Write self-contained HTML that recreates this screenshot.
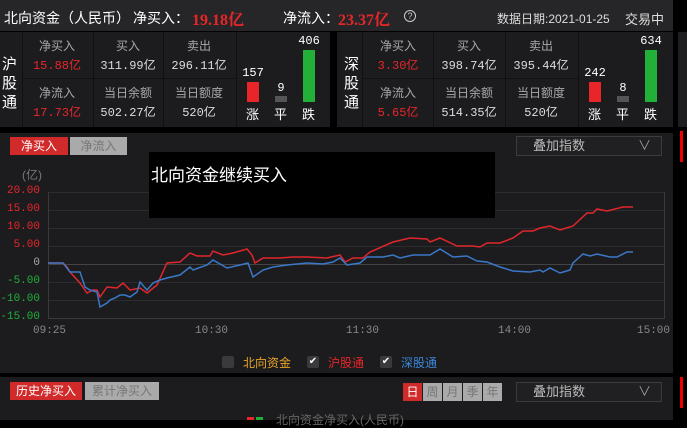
<!DOCTYPE html><html><head><meta charset="utf-8"><style>
*{margin:0;padding:0;box-sizing:border-box}
body{width:687px;height:420px;background:#000;position:relative;overflow:hidden;font-family:"Liberation Sans","Noto Sans CJK SC",sans-serif;color:#ddd}
.a{position:absolute;white-space:nowrap}
.hd{left:0;top:0;width:673px;height:31px;background:#262628}
.card{top:32px;height:95px;background:#1c1c1f}
.c{position:absolute;width:70px;height:46px;text-align:center;font-size:12px}
.c .l{color:#a8a8a8;margin-top:5px;font-size:12px}
.c .v{color:#ddd;margin-top:2px;font-family:"Liberation Mono","Noto Sans CJK SC",monospace;font-size:12px}
.c .r{color:#e8262a}
.bar{position:absolute;width:12px}
.bn{position:absolute;font-size:12px;color:#fff;text-align:center;width:30px;font-family:"Liberation Mono",monospace}
.bl{position:absolute;font-size:13px;color:#fff}
.vl{font-size:15px;color:#fff;line-height:19px;width:18px}
.btn{position:absolute;height:18px;font-size:12px;text-align:center;line-height:18px}
.yl{position:absolute;right:647px;font-size:11px;font-family:"Liberation Mono",monospace}
.sel{position:absolute;border:1px solid #3c3c3e;background:#202022;color:#bbb;font-size:13px;padding-left:16px}
.cb{position:absolute;width:12px;height:12px;background:#3a3a3c;border-radius:2px;color:#fff;font-size:10px;line-height:12px;text-align:center}
</style></head><body>
<div class="a hd"></div>
<div class="a" style="left:4px;top:8px;font-size:14px;color:#fff">北向资金（人民币）</div>
<div class="a" style="left:133px;top:8px;font-size:14px;color:#fff">净买入：</div>
<div class="a" style="left:192px;top:7px;font-size:16px;color:#e8262a;font-weight:bold;font-family:'Liberation Serif','Noto Serif CJK SC',serif">19.18亿</div>
<div class="a" style="left:283px;top:8px;font-size:14px;color:#fff">净流入：</div>
<div class="a" style="left:338px;top:7px;font-size:16px;color:#e8262a;font-weight:bold;font-family:'Liberation Serif','Noto Serif CJK SC',serif">23.37亿</div>
<div class="a" style="left:404px;top:10px;width:12px;height:12px;border:1px solid #ccc;border-radius:50%;font-size:9px;text-align:center;line-height:10px;color:#ccc">?</div>
<div class="a" style="left:497px;top:10px;font-size:12px;color:#ddd">数据日期:2021-01-25</div>
<div class="a" style="left:625px;top:9px;font-size:13px;color:#ddd">交易中</div>

<div class="a card" style="left:0;width:330px"></div>
<div class="a card" style="left:337px;width:336px"></div>
<div class="a card" style="left:678px;width:9px;background:#1e1e20"></div>
<div class="a vl" style="left:2px;top:55px">沪<br>股<br>通</div>
<div class="a" style="left:22px;top:32px;width:1px;height:95px;background:#111"></div>
<div class="a" style="left:22px;top:78px;width:214px;height:1px;background:#111"></div>
<div class="a" style="left:93px;top:32px;width:1px;height:95px;background:#111"></div>
<div class="a" style="left:163px;top:32px;width:1px;height:95px;background:#111"></div>
<div class="a" style="left:236px;top:32px;width:1px;height:95px;background:#111"></div>
<div class="c" style="left:22px;top:32px"><div class="l">净买入</div><div class="v r">15.88亿</div></div>
<div class="c" style="left:93px;top:32px"><div class="l">买入</div><div class="v">311.99亿</div></div>
<div class="c" style="left:164px;top:32px"><div class="l">卖出</div><div class="v">296.11亿</div></div>
<div class="c" style="left:22px;top:79px"><div class="l">净流入</div><div class="v r">17.73亿</div></div>
<div class="c" style="left:93px;top:79px"><div class="l">当日余额</div><div class="v">502.27亿</div></div>
<div class="c" style="left:164px;top:79px"><div class="l">当日额度</div><div class="v">520亿</div></div>
<div class="bar" style="left:247px;top:82px;height:20px;background:#e8262a"></div>
<div class="bar" style="left:275px;top:96px;height:6px;background:#555"></div>
<div class="bar" style="left:303px;top:50px;height:52px;background:#22b03a"></div>
<div class="bn" style="left:238px;top:66px">157</div>
<div class="bn" style="left:266px;top:81px">9</div>
<div class="bn" style="left:294px;top:34px">406</div>
<div class="bl" style="left:246px;top:104px">涨</div>
<div class="bl" style="left:274px;top:104px">平</div>
<div class="bl" style="left:302px;top:104px">跌</div>
<div class="a vl" style="left:344px;top:55px">深<br>股<br>通</div>
<div class="a" style="left:362px;top:32px;width:1px;height:95px;background:#111"></div>
<div class="a" style="left:362px;top:78px;width:216px;height:1px;background:#111"></div>
<div class="a" style="left:433px;top:32px;width:1px;height:95px;background:#111"></div>
<div class="a" style="left:505px;top:32px;width:1px;height:95px;background:#111"></div>
<div class="a" style="left:578px;top:32px;width:1px;height:95px;background:#111"></div>
<div class="c" style="left:363px;top:32px"><div class="l">净买入</div><div class="v r">3.30亿</div></div>
<div class="c" style="left:434px;top:32px"><div class="l">买入</div><div class="v">398.74亿</div></div>
<div class="c" style="left:506px;top:32px"><div class="l">卖出</div><div class="v">395.44亿</div></div>
<div class="c" style="left:363px;top:79px"><div class="l">净流入</div><div class="v r">5.65亿</div></div>
<div class="c" style="left:434px;top:79px"><div class="l">当日余额</div><div class="v">514.35亿</div></div>
<div class="c" style="left:506px;top:79px"><div class="l">当日额度</div><div class="v">520亿</div></div>
<div class="bar" style="left:589px;top:82px;height:20px;background:#e8262a"></div>
<div class="bar" style="left:617px;top:96px;height:6px;background:#555"></div>
<div class="bar" style="left:645px;top:50px;height:52px;background:#22b03a"></div>
<div class="bn" style="left:580px;top:66px">242</div>
<div class="bn" style="left:608px;top:81px">8</div>
<div class="bn" style="left:636px;top:34px">634</div>
<div class="bl" style="left:588px;top:104px">涨</div>
<div class="bl" style="left:616px;top:104px">平</div>
<div class="bl" style="left:644px;top:104px">跌</div>

<div class="a" style="left:0;top:133px;width:673px;height:240px;background:#1c1c1f"></div>
<div class="a" style="left:680px;top:131px;width:3px;height:31px;background:#e00"></div>
<div class="btn" style="left:10px;top:137px;width:58px;background:#d02a2a;color:#fff">净买入</div>
<div class="btn" style="left:70px;top:137px;width:57px;background:#aaa;color:#777">净流入</div>
<div class="sel" style="left:516px;top:136px;width:146px;height:20px;line-height:18px">叠加指数<span style="position:absolute;right:10px;color:#999">∨</span></div>
<div class="a" style="left:22px;top:166px;font-size:12px;color:#777">(亿)</div>
<div class="yl" style="top:185px;color:#e8262a">20.00</div>
<div class="yl" style="top:203px;color:#e8262a">15.00</div>
<div class="yl" style="top:221px;color:#e8262a">10.00</div>
<div class="yl" style="top:239px;color:#e8262a">5.00</div>
<div class="yl" style="top:257px;color:#aaa">0</div>
<div class="yl" style="top:275px;color:#22b03a">-5.00</div>
<div class="yl" style="top:293px;color:#22b03a">-10.00</div>
<div class="yl" style="top:311px;color:#22b03a">-15.00</div>
<svg class="a" style="left:0;top:0" width="687" height="420">
<g stroke="#2c2c2f" stroke-width="1">
<line x1="48" y1="192.5" x2="665" y2="192.5"/><line x1="48" y1="210.5" x2="665" y2="210.5"/><line x1="48" y1="228.5" x2="665" y2="228.5"/><line x1="48" y1="246.5" x2="665" y2="246.5"/><line x1="48" y1="282.5" x2="665" y2="282.5"/><line x1="48" y1="300.5" x2="665" y2="300.5"/>
</g>
<line x1="48" y1="264.5" x2="665" y2="264.5" stroke="#444"/>
<line x1="48" y1="318.5" x2="665" y2="318.5" stroke="#3a3a3c"/>
<line x1="48.5" y1="192" x2="48.5" y2="318" stroke="#3a3a3c"/>
<line x1="664.5" y1="192" x2="664.5" y2="318" stroke="#3a3a3c"/>
<polyline fill="none" stroke="#e0262b" stroke-width="1.5" points="48,263 63,263 67,267 70,272 80,283 87,293 93,290 97,290 100,297 107,287 117,288 123,283 130,290 140,288 147,293 157,285 167,263 180,262 190,253 197,256 210,256 213,251 223,255 233,253 247,249 252,255 255,263 263,258 280,258 293,257 307,257 327,258 340,255 345,262 353,258 363,258 370,252 393,242 410,238 427,239 430,242 440,238 457,246 473,246 480,247 487,243 500,243 513,238 523,231 533,231 540,228 550,226 560,230 573,226 587,213 593,213 597,209 607,211 623,207 633,207"/>
<polyline fill="none" stroke="#3a78c8" stroke-width="1.5" points="48,263 63,263 70,272 80,272 85,287 90,290 97,292 100,307 107,303 110,300 115,298 120,295 125,295 130,297 137,292 140,282 147,290 153,283 160,280 167,278 180,275 190,267 193,270 207,265 213,260 227,268 240,265 248,263 253,277 263,270 273,267 287,265 307,263 323,264 333,262 340,258 347,265 360,263 367,257 383,257 393,255 400,258 413,255 430,255 440,249 453,257 467,256 477,261 487,262 500,267 513,271 530,272 540,270 543,272 550,268 560,273 570,270 573,263 583,254 590,256 597,254 610,257 617,257 627,252 633,252"/>
</svg>
<div class="a" style="left:149px;top:152px;width:346px;height:66px;background:#000"></div>
<div class="a" style="left:151px;top:161px;font-size:17px;color:#fff">北向资金继续买入</div>
<div class="a" style="left:33px;top:325px;font-size:11px;color:#888;font-family:'Liberation Mono',monospace">09:25</div>
<div class="a" style="left:195px;top:325px;font-size:11px;color:#888;font-family:'Liberation Mono',monospace">10:30</div>
<div class="a" style="left:346px;top:325px;font-size:11px;color:#888;font-family:'Liberation Mono',monospace">11:30</div>
<div class="a" style="left:498px;top:325px;font-size:11px;color:#888;font-family:'Liberation Mono',monospace">14:00</div>
<div class="a" style="left:637px;top:325px;font-size:11px;color:#888;font-family:'Liberation Mono',monospace">15:00</div>
<div class="cb" style="left:222px;top:356px"></div>
<div class="a" style="left:243px;top:354px;font-size:12px;color:#e8a528">北向资金</div>
<div class="cb" style="left:307px;top:356px">✔</div>
<div class="a" style="left:328px;top:354px;font-size:12px;color:#e8262a">沪股通</div>
<div class="cb" style="left:380px;top:356px">✔</div>
<div class="a" style="left:401px;top:354px;font-size:12px;color:#3a88d8">深股通</div>

<div class="a" style="left:0;top:377px;width:673px;height:43px;background:#1c1c1f"></div>
<div class="a" style="left:680px;top:377px;width:3px;height:31px;background:#e00"></div>
<div class="btn" style="left:10px;top:382px;width:72px;background:#d02a2a;color:#fff">历史净买入</div>
<div class="btn" style="left:85px;top:382px;width:74px;background:#aaa;color:#777">累计净买入</div>
<div class="btn" style="left:403px;top:383px;width:19px;background:#d02a2a;color:#fff">日</div>
<div class="btn" style="left:423px;top:383px;width:19px;background:#aaa;color:#777">周</div>
<div class="btn" style="left:443px;top:383px;width:19px;background:#aaa;color:#777">月</div>
<div class="btn" style="left:463px;top:383px;width:19px;background:#aaa;color:#777">季</div>
<div class="btn" style="left:483px;top:383px;width:19px;background:#aaa;color:#777">年</div>
<div class="sel" style="left:516px;top:382px;width:146px;height:20px;line-height:18px">叠加指数<span style="position:absolute;right:10px;color:#999">∨</span></div>
<div class="a" style="left:247px;top:417px;width:7px;height:3px;background:#e8262a"></div>
<div class="a" style="left:256px;top:417px;width:7px;height:3px;background:#22b03a"></div>
<div class="a" style="left:276px;top:411px;font-size:12px;color:#666">北向资金净买入(人民币)</div>
</body></html>
